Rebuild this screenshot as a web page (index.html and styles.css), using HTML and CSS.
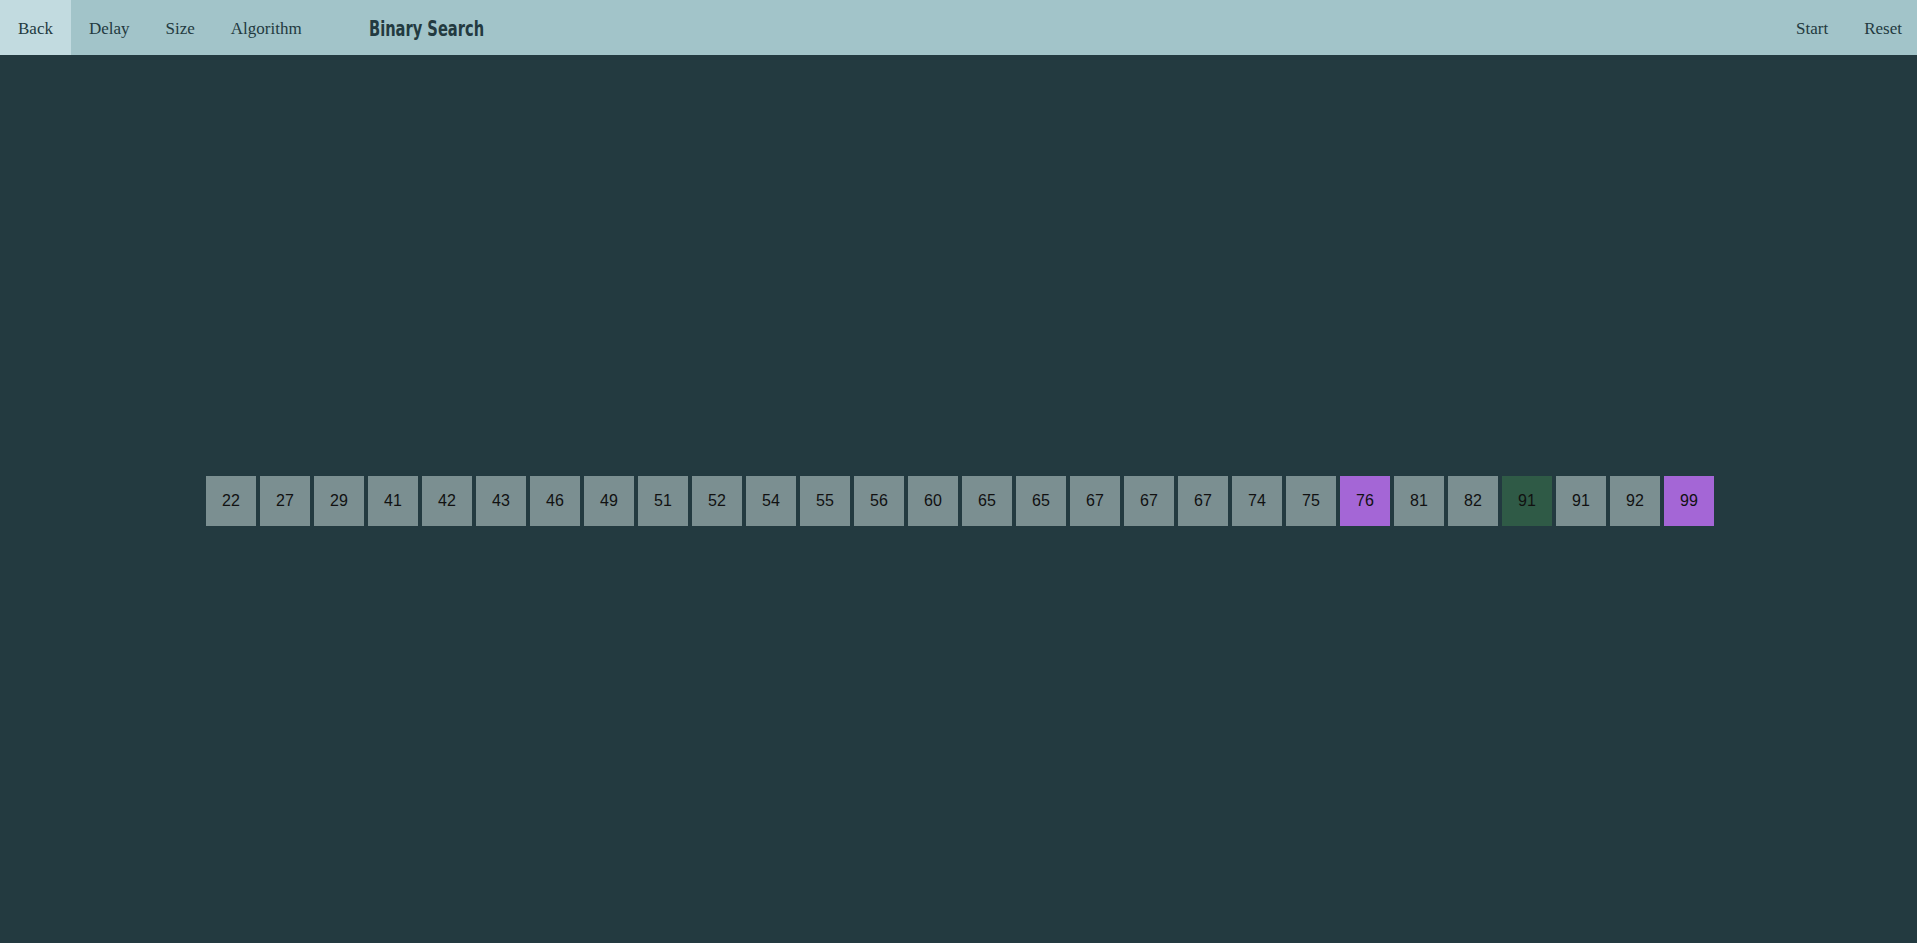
FILE: index.html
```
<!DOCTYPE html>
<html>
<head>
<meta charset="utf-8">
<link rel="stylesheet" href="styles.css">
</head>
<body>
<nav class="topbar">
  <a class="nav-item active">Back</a>
  <a class="nav-item">Delay</a>
  <a class="nav-item">Size</a>
  <a class="nav-item">Algorithm</a>
  <span class="title"><span class="title-text">Binary Search</span></span>
  <span class="spacer"></span>
  <a class="nav-item">Start</a>
  <a class="nav-item last">Reset</a>
</nav>
<main class="stage">
  <div class="array">
    <div class="cell">22</div>
    <div class="cell">27</div>
    <div class="cell">29</div>
    <div class="cell">41</div>
    <div class="cell">42</div>
    <div class="cell">43</div>
    <div class="cell">46</div>
    <div class="cell">49</div>
    <div class="cell">51</div>
    <div class="cell">52</div>
    <div class="cell">54</div>
    <div class="cell">55</div>
    <div class="cell">56</div>
    <div class="cell">60</div>
    <div class="cell">65</div>
    <div class="cell">65</div>
    <div class="cell">67</div>
    <div class="cell">67</div>
    <div class="cell">67</div>
    <div class="cell">74</div>
    <div class="cell">75</div>
    <div class="cell bound">76</div>
    <div class="cell">81</div>
    <div class="cell">82</div>
    <div class="cell mid">91</div>
    <div class="cell">91</div>
    <div class="cell">92</div>
    <div class="cell bound">99</div>
  </div>
</main>
</body>
</html>
```
FILE: styles.css
```
html, body {
  margin: 0;
  padding: 0;
  height: 100%;
}
body {
  background: #233a40;
  display: flex;
  flex-direction: column;
  overflow: hidden;
}
.topbar {
  height: 55px;
  background: #a2c4c9;
  display: flex;
  align-items: stretch;
  flex-shrink: 0;
}
.nav-item {
  display: flex;
  align-items: center;
  padding: 2px 18px 0;
  font-family: "Liberation Serif", serif;
  font-size: 17px;
  color: #233a40;
}
.nav-item.active {
  background: #c2dbe0;
}
.nav-item.last {
  padding-right: 15px;
}
.title {
  display: flex;
  align-items: center;
  margin-left: 49px;
  width: 116px;
  padding-top: 1px;
}
.title-text {
  display: inline-block;
  white-space: nowrap;
  font-family: "DejaVu Sans Condensed", "DejaVu Sans", sans-serif;
  font-weight: bold;
  font-size: 22px;
  color: #233a40;
  transform: scaleX(0.74);
  transform-origin: left center;
}
.spacer {
  flex: 1;
}
.stage {
  flex: 1;
  display: flex;
  align-items: center;
  justify-content: center;
  padding-left: 3px;
  padding-top: 4px;
}
.array {
  display: flex;
  gap: 4px;
}
.cell {
  width: 50px;
  height: 50px;
  background: #7b8f91;
  display: flex;
  align-items: center;
  justify-content: center;
  font-family: "Liberation Sans", Arial, sans-serif;
  font-size: 16px;
  color: #111;
}
.cell.bound {
  background: #a466d6;
}
.cell.mid {
  background: #2f5a46;
}
```
